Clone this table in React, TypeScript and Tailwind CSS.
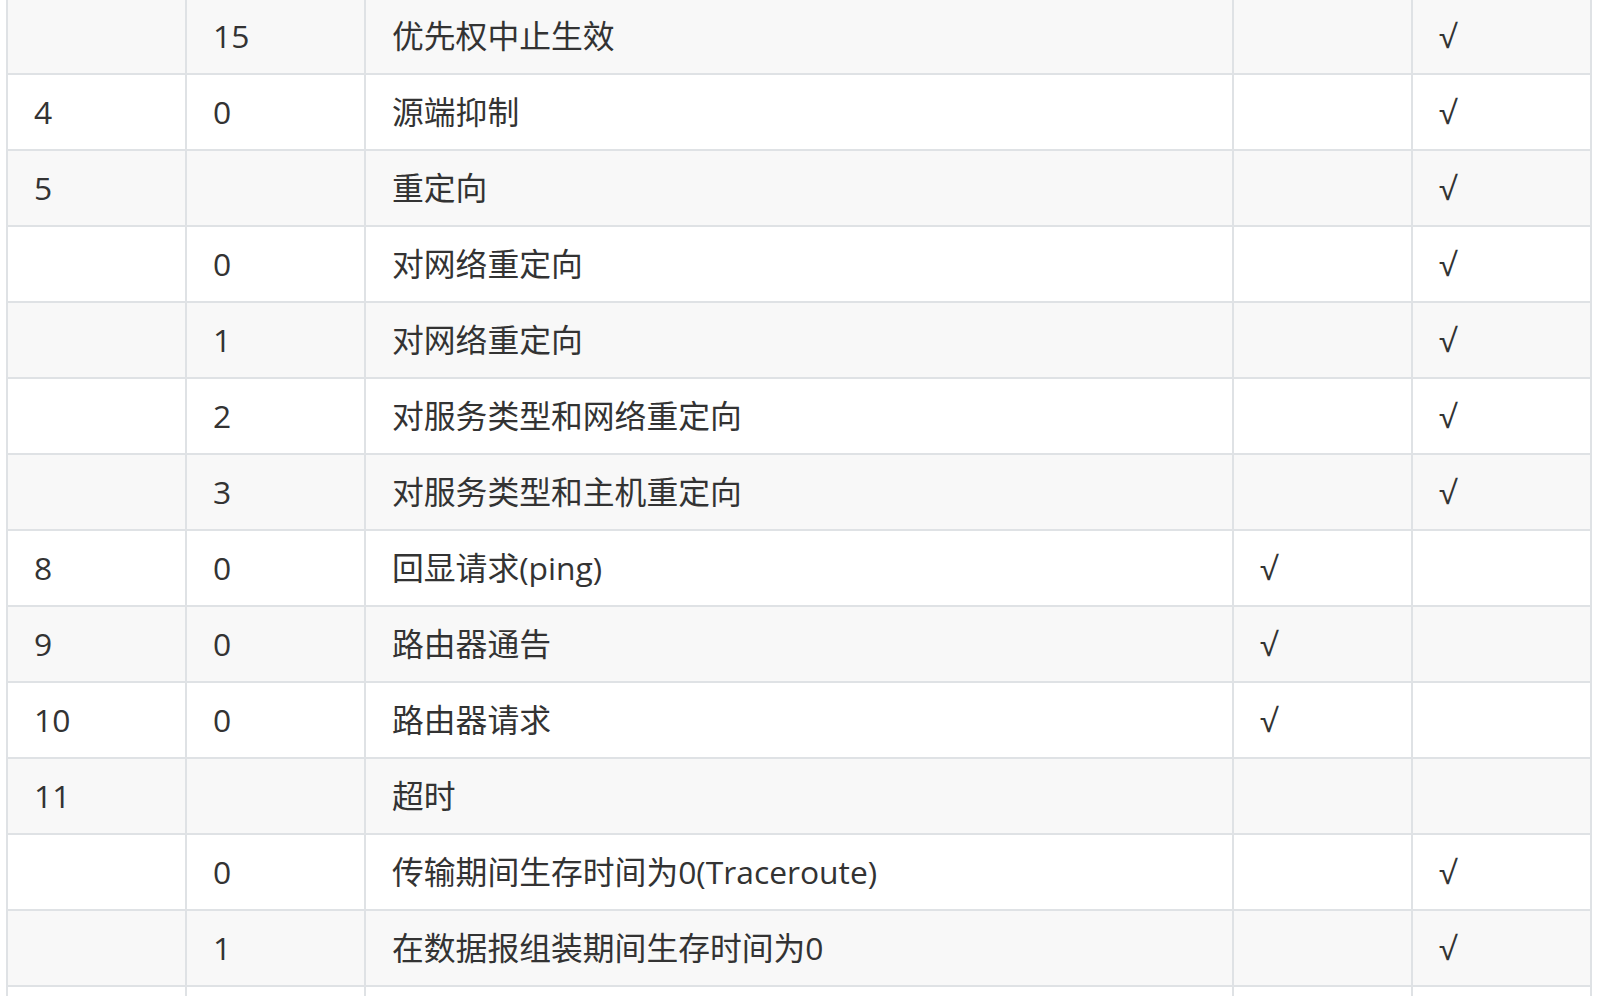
import React from "react";

interface Row {
  type: string;
  code: string;
  desc: string;
  query: string;
  error: string;
}

const rows: Row[] = [
  { type: "", code: "15", desc: "优先权中止生效", query: "", error: "√" },
  { type: "4", code: "0", desc: "源端抑制", query: "", error: "√" },
  { type: "5", code: "", desc: "重定向", query: "", error: "√" },
  { type: "", code: "0", desc: "对网络重定向", query: "", error: "√" },
  { type: "", code: "1", desc: "对网络重定向", query: "", error: "√" },
  { type: "", code: "2", desc: "对服务类型和网络重定向", query: "", error: "√" },
  { type: "", code: "3", desc: "对服务类型和主机重定向", query: "", error: "√" },
  { type: "8", code: "0", desc: "回显请求(ping)", query: "√", error: "" },
  { type: "9", code: "0", desc: "路由器通告", query: "√", error: "" },
  { type: "10", code: "0", desc: "路由器请求", query: "√", error: "" },
  { type: "11", code: "", desc: "超时", query: "", error: "" },
  { type: "", code: "0", desc: "传输期间生存时间为0(Traceroute)", query: "", error: "√" },
  { type: "", code: "1", desc: "在数据报组装期间生存时间为0", query: "", error: "√" },
  { type: "", code: "", desc: "", query: "", error: "" },
];

const App: React.FC = () => {
  return (
    <div
      className="h-[996px] w-full overflow-hidden bg-white text-[#333333]"
      style={{ fontFamily: '"Open Sans", "Noto Sans CJK SC", sans-serif' }}
    >
      <div className="ml-[6px] mt-[-3px] grid w-fit grid-cols-[179px_179px_868px_179px_179px] border-l-2 border-t-2 border-[#dfe2e5] text-[31.8px]">
        {rows.map((row, i) => {
          const bg = i % 2 === 0 ? "bg-[#f8f8f8]" : "bg-white";
          const cells = [row.type, row.code, row.desc, row.query, row.error];
          return cells.map((text, j) => (
            <div
              key={`${i}-${j}`}
              className={`flex h-[76px] items-center border-b-2 border-r-2 border-[#dfe2e5] pl-[26px] leading-[50px] whitespace-nowrap ${bg}`}
            >
              {text}
            </div>
          ));
        })}
      </div>
    </div>
  );
};

export default App;
